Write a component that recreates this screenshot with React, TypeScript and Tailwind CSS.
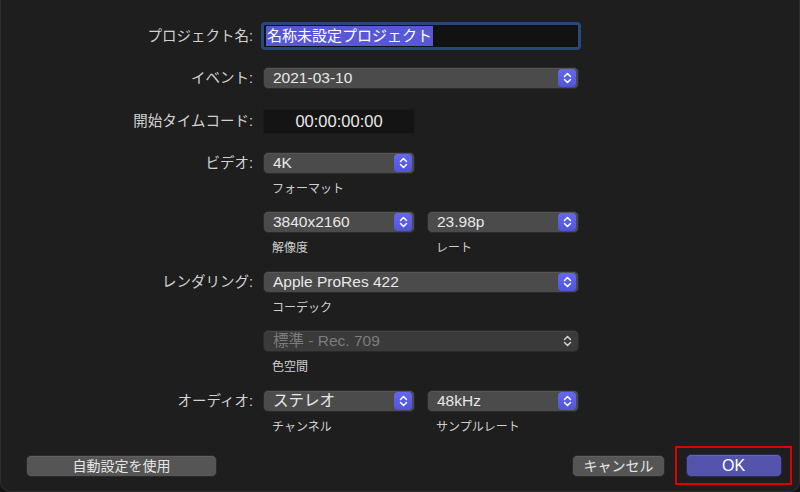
import React from "react";

const FONT = "font-['Liberation_Sans','Noto_Sans_CJK_JP',sans-serif]";

function Chevrons({ className = "" }: { className?: string }) {
  return (
    <svg width="9" height="12" viewBox="0 0 9 12" className={className} fill="none">
      <path d="M1.5 4.5 L4.5 1.5 L7.5 4.5" stroke="currentColor" strokeWidth="1.5" strokeLinecap="round" strokeLinejoin="round" />
      <path d="M1.5 7.5 L4.5 10.5 L7.5 7.5" stroke="currentColor" strokeWidth="1.5" strokeLinecap="round" strokeLinejoin="round" />
    </svg>
  );
}

function Popup({
  value,
  wide = false,
  disabled = false,
}: {
  value: string;
  wide?: boolean;
  disabled?: boolean;
}) {
  return (
    <div
      className={`flex h-[22px] items-center justify-between rounded-[5px] border border-[#2a2a2a] pl-[9px] pr-[2px] shadow-[inset_0_1px_0_rgba(255,255,255,0.06)] ${
        wide ? "w-[316px]" : "w-[152px]"
      } ${disabled ? "bg-[#3a3a3a]" : "bg-[#4b4b4b]"}`}
    >
      <span
        className={`text-[15.5px] leading-none ${disabled ? "text-[#7c7c7c]" : "text-[#e8e8e8]"}`}
      >
        {value}
      </span>
      {disabled ? (
        <span className="flex h-[18px] w-[18px] items-center justify-center text-[#d0d0d0]">
          <Chevrons />
        </span>
      ) : (
        <span className="flex h-[18px] w-[18px] items-center justify-center rounded-[4px] bg-gradient-to-b from-[#6468f0] to-[#5055d8] text-white">
          <Chevrons />
        </span>
      )}
    </div>
  );
}

function Row({ label, children, className = "" }: { label?: string; children: React.ReactNode; className?: string }) {
  return (
    <div className={`flex items-center ${className}`}>
      <div className="w-[253px] shrink-0 pr-[1px] text-right text-[14.5px] leading-none text-[#d2d2d2]">
        {label}
      </div>
      <div className="ml-[9px] flex items-center gap-[12px]">{children}</div>
    </div>
  );
}

function Caption({ items }: { items: string[] }) {
  return (
    <div className="ml-[262px] mt-[7px] flex h-[16px] items-center gap-[12px]">
      {items.map((t) => (
        <div key={t} className="w-[152px] pl-[9px] text-[12px] leading-none text-[#cfcfcf]">
          {t}
        </div>
      ))}
    </div>
  );
}

export default function App() {
  return (
    <div className={`h-[492px] w-[800px] bg-[#141414] ${FONT}`}>
      <div className="relative h-[492px] w-[800px] overflow-hidden rounded-b-[10px] border-x border-b border-[#2e2e2e] bg-[#1e1e1e]">
        <div className="pt-[22px]">
          <Row label="プロジェクト名:">
            <div className="-ml-[2px] flex h-[28px] w-[320px] items-center rounded-[4px] border-[3px] border-[#27487a] bg-[#121212] pl-[2px]">
              <span className="bg-[#5858d6] px-[1px] text-[15px] leading-[20px] text-white">
                名称未設定プロジェクト
              </span>
            </div>
          </Row>

          <Row label="イベント:" className="mt-[17px]">
            <Popup value="2021-03-10" wide />
          </Row>

          <Row label="開始タイムコード:" className="mt-[20px]">
            <div className="flex h-[25px] w-[152px] items-center justify-center border border-[#1a1a1a] bg-[#141414] text-[16.5px] leading-none text-[#e8e8e8]">
              00:00:00:00
            </div>
          </Row>

          <Row label="ビデオ:" className="mt-[18px]">
            <Popup value="4K" />
          </Row>
          <Caption items={["フォーマット"]} />

          <Row className="mt-[14px]">
            <Popup value="3840x2160" />
            <Popup value="23.98p" />
          </Row>
          <Caption items={["解像度", "レート"]} />

          <Row label="レンダリング:" className="mt-[15px]">
            <Popup value="Apple ProRes 422" wide />
          </Row>
          <Caption items={["コーデック"]} />

          <Row className="mt-[14px]">
            <Popup value="標準 - Rec. 709" wide disabled />
          </Row>
          <Caption items={["色空間"]} />

          <Row label="オーディオ:" className="mt-[15px]">
            <Popup value="ステレオ" />
            <Popup value="48kHz" />
          </Row>
          <Caption items={["チャンネル", "サンプルレート"]} />
        </div>

        <div className="mt-[11px] flex items-center pl-[25px] pr-[7px]">
          <button className="flex h-[22px] w-[191px] items-center justify-center rounded-[5px] border border-[#2a2a2a] bg-[#555555] text-[14px] leading-none text-[#e6e6e6] shadow-[inset_0_1px_0_rgba(255,255,255,0.07)]">
            自動設定を使用
          </button>
          <div className="flex-1" />
          <button className="flex h-[22px] w-[93px] items-center justify-center rounded-[5px] border border-[#2a2a2a] bg-[#555555] text-[14px] leading-none text-[#e6e6e6] shadow-[inset_0_1px_0_rgba(255,255,255,0.07)]">
            キャンセル
          </button>
          <div className="ml-[10px] flex h-[39px] w-[117px] items-center justify-center border-2 border-[#e00000]">
            <button className="flex h-[23px] w-[96px] items-center justify-center rounded-[5px] border border-[#2a2a5a] bg-[#5454ad] text-[16px] font-medium leading-none text-white shadow-[inset_0_1px_0_rgba(255,255,255,0.1)]">
              OK
            </button>
          </div>
        </div>
      </div>
    </div>
  );
}
